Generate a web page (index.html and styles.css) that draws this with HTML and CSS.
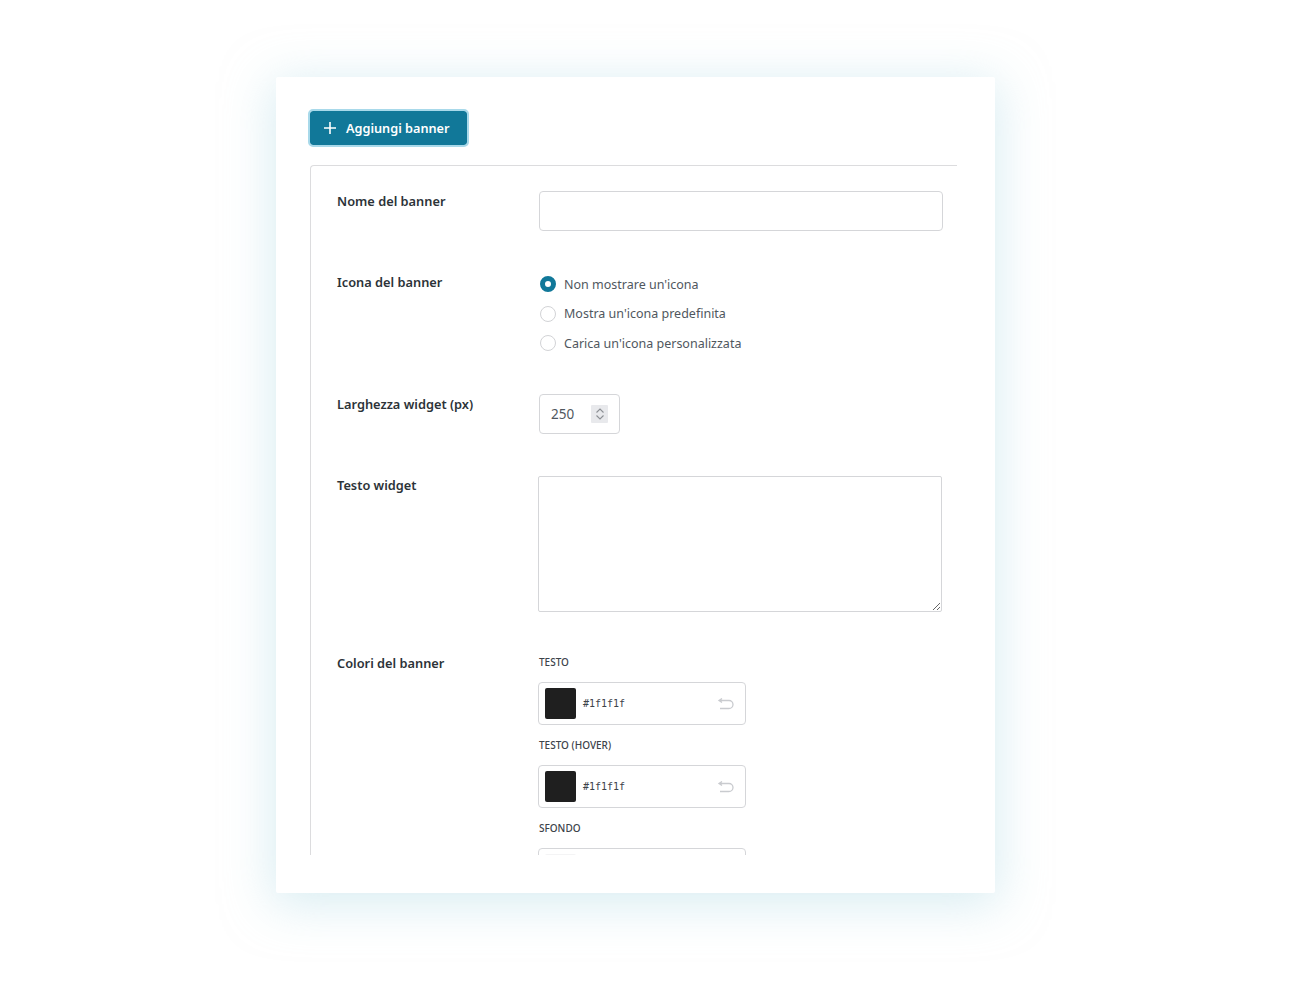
FILE: index.html
```html
<!doctype html>
<html>
<head>
<meta charset='UTF-8'>
<meta name='viewport' content='width=device-width, initial-scale=1'>
<title>Banner</title>
<link rel="stylesheet" href="styles.css">
</head>
<body>
<div class='card'>
<div class='toolbar'>
<button class='add-button'><svg width='14' height='14' viewBox='0 0 14 14'><path d='M7 1v12M1 7h12' stroke='#fff' stroke-width='1.6' fill='none'/></svg> Aggiungi banner</button>
</div>
<div class='panel'>

<div class='row'>
<div class='row-label'>Nome del banner</div>
<div class='row-field'><input type='text' class='text-input'></div>
</div>

<div class='row'>
<div class='row-label'>Icona del banner</div>
<div class='row-field'>
<label class='radio'><span class='radio-dot checked'></span>Non mostrare un'icona</label>
<label class='radio'><span class='radio-dot'></span>Mostra un'icona predefinita</label>
<label class='radio'><span class='radio-dot'></span>Carica un'icona personalizzata</label>
</div>
</div>

<div class='row'>
<div class='row-label'>Larghezza widget (px)</div>
<div class='row-field'>
<div class='number-input'><span class='number-value'>250</span><span class='spinner'><svg width='10' height='14' viewBox='0 0 10 14'><path d='M1.5 5.5L5 2l3.5 3.5M1.5 8.5L5 12l3.5-3.5' stroke='#8c8f94' stroke-width='1.1' fill='none'/></svg></span></div>
</div>
</div>

<div class='row'>
<div class='row-label'>Testo widget</div>
<div class='row-field'><textarea class='text-area'></textarea></div>
</div>

<div class='row'>
<div class='row-label'>Colori del banner</div>
<div class='row-field'>
<div class='color-label first'>Testo</div>
<div class='color-box'><span class='swatch'></span><span class='color-code'>#1f1f1f</span><svg class='undo' width='18' height='12' viewBox='0 0 18 12'><path d='M2 2.5h10a4 4 0 0 1 0 8H3M5 0.5l-3 2 3 2' stroke='#c9cbcf' stroke-width='1.3' fill='none'/></svg></div>
<div class='color-label'>Testo (hover)</div>
<div class='color-box'><span class='swatch'></span><span class='color-code'>#1f1f1f</span><svg class='undo' width='18' height='12' viewBox='0 0 18 12'><path d='M2 2.5h10a4 4 0 0 1 0 8H3M5 0.5l-3 2 3 2' stroke='#c9cbcf' stroke-width='1.3' fill='none'/></svg></div>
<div class='color-label'>Sfondo</div>
<div class='color-box'><span class='swatch light'></span></div>
</div>
</div>

</div>
</div>
</body>
</html>
```

FILE: styles.css
```css
body
{
margin: 0;
padding: 77px 0 88px 276px;
background-color: #fff;
font-family: "Noto Sans", "Open Sans", sans-serif;
color: #1d2327;
}

.card
{
width: 719px;
height: 816px;
box-sizing: border-box;
padding: 34px 38px 38px 34px;
background-color: #fff;
border-radius: 2px;
box-shadow: 0 8px 48px 4px rgba(185, 222, 232, 0.55);
display: flex;
flex-direction: column;
}

.toolbar
{
padding-bottom: 20px;
}

.add-button
{
display: flex;
align-items: center;
gap: 9px;
height: 34px;
width: 157px;
padding: 0 0 0 13px;
box-sizing: border-box;
border: 0;
border-radius: 3px;
background-color: #117899;
color: #fff;
font-family: inherit;
font-size: 12.7px;
font-weight: 600;
outline: 2px solid #a8d9ea;
outline-offset: 0;
}

.panel
{
flex: 1;
overflow: hidden;
border-top: 1px solid #dcdcde;
border-left: 1px solid #dcdcde;
border-top-left-radius: 4px;
padding: 25px 0 0 26px;
}

.row
{
display: flex;
padding-bottom: 41px;
}

.row-label
{
width: 202px;
flex-shrink: 0;
font-size: 12.8px;
font-weight: 600;
line-height: 20px;
color: #2c3338;
}

.text-input
{
display: block;
width: 404px;
height: 40px;
box-sizing: border-box;
border: 1px solid #d5d6d9;
border-radius: 4px;
margin: 0;
}

.radio
{
display: flex;
align-items: center;
gap: 8px;
height: 20px;
margin: 2px 0 9.5px 1px;
font-size: 12.5px;
color: #50575e;
}

.radio:last-child
{
margin-bottom: 0;
}

.radio-dot
{
width: 14px;
height: 14px;
border: 1px solid #d2d3d6;
border-radius: 50%;
box-sizing: content-box;
}

.radio-dot.checked
{
background-color: #fff;
border: 5px solid #117899;
width: 6px;
height: 6px;
}

.number-input
{
width: 81px;
height: 40px;
box-sizing: border-box;
border: 1px solid #d5d6d9;
border-radius: 4px;
display: flex;
align-items: center;
padding: 0 11px 0 11px;
font-size: 13.5px;
color: #50575e;
}

.number-value
{
flex: 1;
}

.spinner
{
width: 17px;
height: 18px;
background-color: #e8e9ec;
border-radius: 1px;
display: flex;
align-items: center;
justify-content: center;
}

.text-area
{
display: block;
width: 404px;
height: 136px;
box-sizing: border-box;
border: 1px solid #d5d6d9;
border-radius: 2px;
margin: 1px 0 0 -1px;
font-family: inherit;
}

.color-label
{
font-size: 10px;
font-weight: 500;
text-transform: uppercase;
line-height: 14px;
color: #3c434a;
margin: 13px 0 13px 0;
}

.color-label.first
{
margin-top: 2px;
}

.color-box
{
width: 208px;
height: 43px;
box-sizing: border-box;
margin-left: -1px;
border: 1px solid #d5d6d9;
border-radius: 4px;
display: flex;
align-items: center;
padding: 0 10px 0 6px;
}

.swatch
{
width: 31px;
height: 31px;
background-color: #1f1f1f;
border-radius: 2px;
flex-shrink: 0;
}

.swatch.light
{
background-color: #f4f4f5;
}

.color-code
{
flex: 1;
margin-left: 7px;
font-family: "DejaVu Sans Mono", monospace;
font-size: 10px;
color: #3c434a;
}
```
